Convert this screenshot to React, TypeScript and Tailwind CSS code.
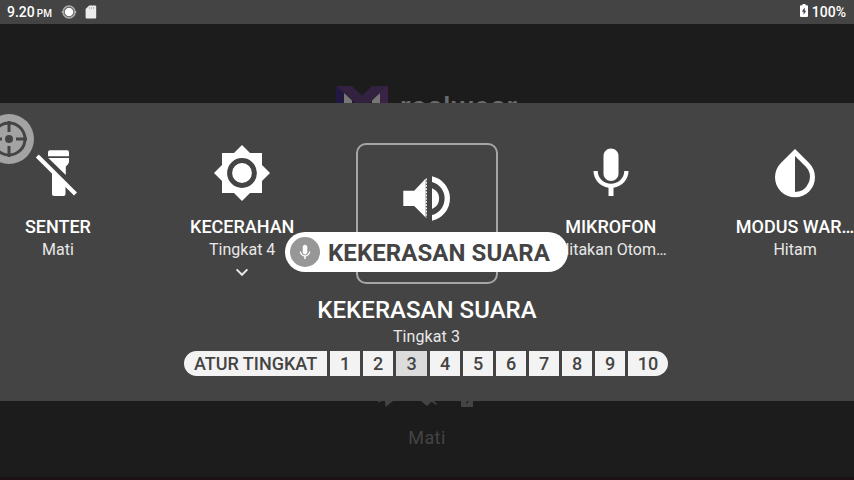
import type { ReactNode } from 'react';

type TileProps = {
  icon: ReactNode;
  title: string;
  detail: string;
  expandable?: boolean;
};

function Tile({ icon, title, detail, expandable }: TileProps) {
  return (
    <div className="flex h-[142px] w-[142px] shrink-0 flex-col items-center px-3">
      <div className="flex h-[60px] w-[60px] shrink-0 items-center justify-center">{icon}</div>
      <div className="mt-[13px] text-center text-[18px] leading-[22px] font-medium whitespace-nowrap">{title}</div>
      <div className="text-center text-[16px] leading-6 whitespace-nowrap text-[#e8e8e8]">{detail}</div>
      {expandable && (
        <svg className="mt-[6px] shrink-0" width="14" height="9" viewBox="0 0 14 9">
          <path d="M1.6 1.4 7 6.8 12.4 1.4" fill="none" stroke="#e8e8e8" strokeWidth="2" />
        </svg>
      )}
    </div>
  );
}

function MicIcon({ size }: { size: number }) {
  return (
    <svg width={size} height={size} viewBox="0 -0.2 24 24" fill="currentColor">
      <path d="M12 15c1.66 0 3-1.34 3-3V5c0-1.66-1.34-3-3-3S9 3.34 9 5v7c0 1.66 1.34 3 3 3z" />
      <path d="M17.3 11c0 3-2.54 5.1-5.3 5.1S6.7 14 6.7 11H5c0 3.41 2.72 6.23 6 6.72V21h2v-3.28c3.28-.48 6-3.3 6-6.72z" />
    </svg>
  );
}

function TorchOffIcon() {
  return (
    <svg width="60" height="60" viewBox="28 143 60 60" fill="currentColor">
      <path d="M50 150.3h17a2 2 0 0 1 2 2v4H48v-4a2 2 0 0 1 2-2z" />
      <path d="M48.3 158H69v3.2q0 2-1.2 3.2l-2 2.2v8.3z" />
      <path d="M52 169.5 65.5 183v11a2 2 0 0 1-2 2H54a2 2 0 0 1-2-2z" />
      <path d="m37.3 156 38.2 38" stroke="currentColor" strokeWidth="4.2" />
    </svg>
  );
}

function BrightnessIcon() {
  return (
    <svg width="60" height="60" viewBox="212 143 60 60">
      <path
        d="M242 145 250 153h12v12l8 8-8 8v12h-12l-8 8-8-8h-12v-12l-8-8 8-8v-12h12z"
        fill="currentColor"
      />
      <circle cx="242" cy="173" r="12.4" fill="none" stroke="#444444" strokeWidth="5" />
    </svg>
  );
}

function InvertIcon() {
  return (
    <svg width="60" height="60" viewBox="765 143 60 60" fill="currentColor">
      <path
        fillRule="evenodd"
        d="M795 149 809.1 163.1A20 20 0 1 1 780.9 163.1zM795 156V192A15 15 0 0 0 805.6 166.6z"
      />
    </svg>
  );
}

function VolumeIcon() {
  return (
    <svg width="48" height="48" viewBox="403 174 48 48" fill="currentColor">
      <path d="M403.3 190.7h10.9L425.7 178.5v39L414.2 206h-10.9z" />
      <path d="M426.4 178.5v39" stroke="currentColor" strokeWidth="1" strokeDasharray="2 1.2" fill="none" />
      <path d="M432 188.3a11 11 0 0 1 0 20.6z" />
      <path d="M432 176.3a22.7 22.7 0 0 1 0 44.4V215a17.1 17.1 0 0 0 0-33z" />
    </svg>
  );
}

const levels = [1, 2, 3, 4, 5, 6, 7, 8, 9];

export default function App() {
  return (
    <div className="relative flex h-[480px] w-[854px] flex-col overflow-hidden bg-[#1c1c1c] font-['Roboto',sans-serif] text-white">
      <header className="flex h-6 shrink-0 items-center bg-[#444444] pl-[7px] pr-2 text-[14px] font-medium">
        <span>9.20</span>
        <span className="ml-[2px] pt-[3px] text-[10px]">PM</span>
        <svg className="ml-[9px]" width="16" height="16" viewBox="0 0 16 16">
          <circle cx="8" cy="8" r="5.9" fill="none" stroke="#a8a8a8" strokeWidth="1.8" />
          <path d="M0.7 8h2.5M12.8 8h2.5" stroke="#a8a8a8" strokeWidth="1.8" />
          <circle cx="8" cy="8" r="4.3" fill="#fff" />
        </svg>
        <svg className="ml-2" width="12" height="14" viewBox="0 0 12 14">
          <path d="M4.2.5h6a1 1 0 0 1 1 1v11a1 1 0 0 1-1 1H1.6a1 1 0 0 1-1-1V4.1z" fill="#ededed" />
          <path d="M4.5 2v2.2M6.6 2v2.2M8.7 2v2.2" stroke="#bbb" strokeWidth="1" />
        </svg>
        <svg className="mb-[3px] ml-auto" width="8" height="13" viewBox="0 0 8 14" preserveAspectRatio="none">
          <path d="M2.5 0h3v1.4H7a1 1 0 0 1 1 1V13a1 1 0 0 1-1 1H1a1 1 0 0 1-1-1V2.4a1 1 0 0 1 1-1h1.5z" fill="#fff" />
          <path d="M4.7 3.8 1.8 8.2h1.7v3.4l2.8-4.4H4.7z" fill="#444444" />
        </svg>
        <span className="ml-1">100%</span>
      </header>

      <div className="flex h-[79px] shrink-0 items-start overflow-hidden pt-[62px] pl-[336px]">
        <svg width="52" height="40" viewBox="0 0 52 40">
          <path d="M0 0h16l10 9.5L36 0h16v40h-8V7L26 24 8 7v33H0z" fill="#32213f" />
          <path d="M0 0 8 7v33H0z" fill="#211942" />
          <path d="M52 0 44 7v33h8z" fill="#3b2348" />
          <path d="M8 7 16 14.5V40H8zM44 7 36 14.5V40h8z" fill="#777777" />
        </svg>
        <span className="mt-[3px] ml-3 font-['Inter',sans-serif] text-[27px] leading-[36px] font-semibold tracking-[0.5px] text-[#6b6b6b]">
          realwear
        </span>
      </div>

      <main className="flex h-[298px] shrink-0 flex-col items-center bg-[#444444]">
        <div className="mt-10 mr-[1px] flex h-[142px] justify-center gap-[42.3px]">
          <Tile icon={<TorchOffIcon />} title="SENTER" detail="Mati" />
          <Tile icon={<BrightnessIcon />} title="KECERAHAN" detail="Tingkat 4" expandable />
          <div className="flex h-[141px] w-[142px] shrink-0 justify-center rounded-[10px] border-2 border-[#a6a6a6] pt-[29px] pl-[1px]">
            <VolumeIcon />
          </div>
          <Tile icon={<MicIcon size={60} />} title="MIKROFON" detail="Alitakan Otom…" />
          <Tile icon={<InvertIcon />} title="MODUS WAR…" detail="Hitam" />
        </div>
        <h1 className="mt-[10px] text-[24px] leading-[30px] font-medium tracking-[0.04px]">KEKERASAN SUARA</h1>
        <p className="mr-[1px] text-[16px] leading-6 tracking-[0.1px] text-[#e8e8e8]">Tingkat 3</p>
        <div className="mt-[2px] mr-[2px] flex h-[25px] gap-[3px] text-[18px] leading-[25px] font-medium text-[#444444]">
          <span className="w-[143px] rounded-l-full bg-[#f3f3f3] text-center">ATUR TINGKAT</span>
          {levels.map((level) => (
            <span
              key={level}
              className={level === 3 ? 'w-[31px] bg-[#dcdcdc] text-center' : 'w-[30px] bg-[#f3f3f3] text-center'}
            >
              {level}
            </span>
          ))}
          <span className="w-10 rounded-r-full bg-[#f3f3f3] text-center">10</span>
        </div>
      </main>

      <footer className="flex h-[79px] shrink-0 flex-col items-center overflow-hidden border-b-[3px] border-[#1c1215] text-[#444444]">
        <svg width="100" height="8" viewBox="377 401 100 8" fill="#444444">
          <path d="M378 401h3l-2 2zM385 401h8l-7.5 6z" />
          <path d="M421 401h11l-5 5zM431 401h3l3 3-1.2 1z" />
          <path d="M461 401h12v5a1 1 0 0 1-1 1h-10a1 1 0 0 1-1-1z" />
          <path d="m468 401-1.5 2.5" stroke="#1c1c1c" strokeWidth="1.3" />
        </svg>
        <span className="mt-[17px] text-[18px] leading-6 tracking-[0.4px]">Mati</span>
      </footer>

      <svg className="absolute top-[114px] left-[-16px]" width="50" height="50" viewBox="0 0 50 50">
        <circle cx="25" cy="25" r="25" fill="#a3a3a3" />
        <circle cx="25" cy="25" r="16" fill="none" stroke="#444444" strokeWidth="3" />
        <path d="M25 7v11M25 32v11M7 25h11M32 25h11" stroke="#444444" strokeWidth="3" />
        <circle cx="25" cy="25" r="4" fill="#444444" />
      </svg>

      <div className="absolute top-[232px] left-[285px] flex h-10 w-[283px] items-center rounded-full bg-white pl-[5px] text-[#444444]">
        <span className="flex h-[30px] w-[30px] items-center justify-center rounded-full bg-[#979797] text-white">
          <MicIcon size={18} />
        </span>
        <span className="ml-2 pt-[2px] text-[24px] leading-[30px] font-bold tracking-[0.08px] whitespace-nowrap">
          KEKERASAN SUARA
        </span>
      </div>
    </div>
  );
}
